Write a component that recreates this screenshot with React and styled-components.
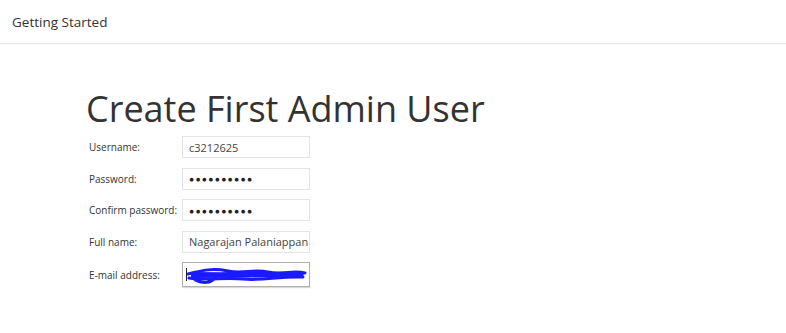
import React from "react";
import styled, { createGlobalStyle } from "styled-components";

const Global = createGlobalStyle`
  html, body { margin: 0; padding: 0; background: #fff; }
  body { font-family: "Open Sans", "Noto Sans", sans-serif; color: #333; }
`;

const Page = styled.div`
  width: 786px;
  height: 333px;
  overflow: hidden;
`;

const Header = styled.header`
  height: 44px;
  box-sizing: border-box;
  border-bottom: 1px solid #e5e5e5;
  display: flex;
  align-items: center;
  padding: 0 12px 0;
  font-size: 13.5px;
  color: #333;
`;

const Main = styled.main`
  padding: 43px 0 0 86px;
`;

const Title = styled.h1`
  margin: 0 0 5px;
  font-size: 36px;
  font-weight: 400;
  line-height: 44px;
  color: #333;
`;

const Form = styled.div`
  display: grid;
  grid-template-columns: 93px 128px;
  row-gap: 9.5px;
  align-items: center;
  padding-left: 3px;
`;

const Label = styled.label`
  font-size: 10px;
  color: #333;
  white-space: nowrap;
`;

const Field = styled.div`
  position: relative;
  box-sizing: border-box;
  width: 128px;
  height: ${(p) => (p.$focused ? "25px" : "22px")};
  border: 1px solid ${(p) => (p.$focused ? "#b0b0b0" : "#e4e4e4")};
  box-shadow: ${(p) => (p.$focused ? "0 1px 1px #d8d8d8" : "none")};
  display: flex;
  align-items: center;
  padding-left: 6px;
  font-size: 11px;
  color: #444;
  white-space: nowrap;
  overflow: hidden;
`;

const Dots = styled.span`
  font-size: 8.5px;
  letter-spacing: 1.3px;
  color: #222;
`;

const Scribble = styled.svg`
  position: absolute;
  left: 0;
  top: 0;
`;

const Caret = styled.span`
  position: absolute;
  left: 3px;
  top: 5px;
  width: 1px;
  height: 13px;
  background: #222;
`;

export default function App() {
  return (
    <Page>
      <Global />
      <Header>Getting Started</Header>
      <Main>
        <Title>Create First Admin User</Title>
        <Form>
          <Label>Username:</Label>
          <Field>c3212625</Field>
          <Label>Password:</Label>
          <Field><Dots>●●●●●●●●●●</Dots></Field>
          <Label>Confirm password:</Label>
          <Field><Dots>●●●●●●●●●●</Dots></Field>
          <Label>Full name:</Label>
          <Field>Nagarajan Palaniappan</Field>
          <Label>E-mail address:</Label>
          <Field $focused>
            <Scribble width="128" height="25" viewBox="0 0 128 25">
              <path
                d="M5 11 C20 7, 30 5, 45 8 S70 6, 85 9 S110 7, 122 10 M6 15 C25 18, 40 14, 60 16 S95 13, 120 14 M12 17 C20 21, 28 20, 32 15 M40 11 C55 10, 80 11, 118 12"
                stroke="#1a1aff"
                strokeWidth="3"
                fill="none"
                strokeLinecap="round"
              />
              <path d="M8 9 L121 10 L120 14 L8 15 Z" fill="#1a1aff" />
            </Scribble>
            <Caret />
          </Field>
        </Form>
      </Main>
    </Page>
  );
}
